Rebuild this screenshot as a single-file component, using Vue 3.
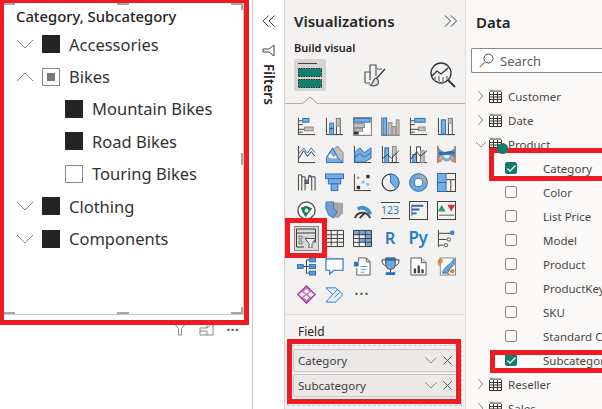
<script setup>
const parents = [
  { label: 'Accessories', state: 'on', open: false },
  { label: 'Bikes', state: 'part', open: true },
  { label: 'Mountain Bikes', state: 'on', child: true },
  { label: 'Road Bikes', state: 'on', child: true },
  { label: 'Touring Bikes', state: 'off', child: true },
  { label: 'Clothing', state: 'on', open: false },
  { label: 'Components', state: 'on', open: false }
]
const fields = [
  { label: 'Category', on: true },
  { label: 'Color' },
  { label: 'List Price' },
  { label: 'Model' },
  { label: 'Product' },
  { label: 'ProductKey' },
  { label: 'SKU' },
  { label: 'Standard Cost' },
  { label: 'Subcategory', on: true }
]
</script>

<template>
  <div class="page">
    <section class="canvas">
      <div class="slicer">
        <div class="slicer-title">Category, Subcategory</div>
        <div v-for="row in parents" :key="row.label" class="slicer-row" :class="{ child: row.child }">
          <svg v-if="!row.child" class="chev" viewBox="0 0 18 10">
            <path :d="row.open ? 'M1 9L9 1L17 9' : 'M1 1L9 9L17 1'" />
          </svg>
          <span class="box" :class="row.state"><i v-if="row.state === 'part'"></i></span>
          <span class="slicer-label">{{ row.label }}</span>
        </div>
        <i class="grip h" style="left:0;top:0"></i>
        <i class="grip h" style="left:114px;top:0"></i>
        <i class="grip h" style="right:0;top:0"></i>
        <i class="grip c" style="right:0;top:0"></i>
        <i class="grip v" style="right:0;top:150px"></i>
        <i class="grip h" style="left:0;bottom:0"></i>
        <i class="grip h" style="left:114px;bottom:0"></i>
        <i class="grip h" style="right:0;bottom:0"></i>
        <i class="grip c" style="right:0;bottom:0"></i>
      </div>
      <div class="card-tools">
        <svg width="14" height="14" viewBox="0 0 14 14"><path class="thin" d="M1 1H13L8.500 6.500V13H5.500V6.500Z" /></svg>
        <svg width="15" height="14" viewBox="0 0 15 14"><path class="thin" d="M8 1H14V13H1V6H8ZM1 9H8V13M8 6L14 1M10 1H14V5" /></svg>
        <span class="dots">···</span>
      </div>
    </section>

    <aside class="filters">
      <svg class="dbl" viewBox="0 0 14 12"><path d="M6.500 0.500L1 6L6.500 11.500M12.500 0.500L7 6L12.500 11.500" /></svg>
      <svg class="funnel" viewBox="0 0 13 13"><path d="M12 1L7 5H1V8H7L12 12Z" /></svg>
      <span class="filters-text">Filters</span>
    </aside>

    <aside class="viz">
      <div class="viz-head">
        <span class="pane-title">Visualizations</span>
        <svg class="dbl" viewBox="0 0 14 12"><path d="M1 0.500L6.500 6L1 11.500M7 0.500L12.500 6L7 11.500" /></svg>
      </div>
      <div class="build">Build visual</div>
      <div class="tabs">
        <div class="tab active">
          <svg width="28" height="28" viewBox="0 0 28 28">
            <path d="M2 2.500H21" stroke="#444" fill="none" />
            <rect x="2.500" y="7.500" width="23" height="8" fill="#118070" stroke="#222" stroke-dasharray="1.500 1" />
            <rect x="2.500" y="18.500" width="23" height="8" fill="#118070" stroke="#222" stroke-dasharray="1.500 1" />
          </svg>
        </div>
        <div class="tab">
          <svg width="26" height="26" viewBox="0 0 26 26" fill="none" stroke="#555" stroke-width="1.200">
            <path d="M2 21V10H7V3H13V7H19M2 21H7" />
            <path d="M13 8V14M7 10V18" />
            <path d="M22 7L13 17" stroke="#333" />
            <path d="M13 16C9 18 11 22 7 23C12 25 17 23 15 18Z" fill="#ddd" />
          </svg>
        </div>
        <div class="tab">
          <svg width="27" height="27" viewBox="0 0 27 27" fill="none" stroke="#333" stroke-width="1.300">
            <circle cx="12" cy="11" r="10" />
            <path d="M19 18L26 25" stroke-width="2" />
            <path d="M3 14L8 9L12 12L19 6" />
            <path d="M6 15V19M10 14V21M14 15V21M18 14V18" stroke="#777" />
          </svg>
        </div>
      </div>
      <div class="tab-rule"><svg class="notch" width="20" height="8" viewBox="0 0 20 8"><path d="M0 8L8 1L16 8" /></svg></div>

      <div class="icon-grid">
        <!-- row 1 -->
        <svg viewBox="0 0 20 20"><path class="k" d="M1.500 1V18.500H19" /><path class="k" d="M2 4H6M2 8H6M2 13H12M2 16H6" /><rect class="b" x="6" y="1.500" width="6.500" height="4" /><rect class="g" x="8" y="10.500" width="9" height="4" /></svg>
        <svg viewBox="0 0 20 20"><path class="k" d="M1.500 1V18.500H19" /><rect class="b" x="5" y="6.500" width="4" height="12" /><path class="k" d="M5 12H9" /><rect class="w" x="12" y="1.500" width="4" height="17" /><rect class="g" x="12" y="1.500" width="4" height="8" /></svg>
        <svg viewBox="0 0 20 20"><rect class="o" x="0.500" y="0.500" width="19" height="19" /><rect class="b" x="1" y="1.500" width="17" height="4" /><rect class="g" x="1" y="7" width="11" height="4" /><rect class="g" x="1" y="12" width="9" height="3" /><rect x="1" y="15.500" width="5" height="3" fill="#333" /></svg>
        <svg viewBox="0 0 20 20"><path class="o" d="M0.500 0.500V19.500H19.500" /><rect class="b" x="2" y="1" width="4" height="18" /><rect class="g" x="7.500" y="6" width="4" height="13" /><rect class="g" x="12.500" y="10" width="3" height="9" /><rect class="g" x="16" y="3" width="3" height="16" /></svg>
        <svg viewBox="0 0 20 20"><path class="k" d="M1.500 1V18.500H19" /><path class="k" d="M2 4H6M2 8H6M2 13H12M2 16H6" /><rect class="b" x="6" y="1.500" width="11" height="4" /><rect class="g" x="10" y="10.500" width="7" height="4" /></svg>
        <svg viewBox="0 0 20 20"><path class="k" d="M1.500 1V18.500H19" /><rect class="b" x="4.500" y="3" width="4.500" height="15" /><rect class="w" x="12" y="1.500" width="4" height="17" /><rect class="g" x="12" y="1.500" width="4" height="5" /></svg>
        <!-- row 2 -->
        <svg viewBox="0 0 20 20"><path class="k" d="M1.500 1V18.500H19" /><path class="k" d="M2 14L7 6L11 12L15 7L19 12" /><path class="bl" d="M2 9L7 3.500L11 8.500L15 3L19 8" /></svg>
        <svg viewBox="0 0 20 20"><path class="g" d="M8 6L13 1L19 8V18.500H11Z" /><path class="b" d="M1.500 18.500V13L8 3L14 14L19 18.500Z" /><path class="wf" d="M3 12L6 9L9 13L12 11V14H5Z" /></svg>
        <svg viewBox="0 0 20 20"><path class="k" d="M1.500 1V18.500H19" /><path class="b" d="M2 8L7 3L12 8L19 3V14L12 18H2Z" /><path class="bl" d="M2 13L7 9L12 13L19 8" /></svg>
        <svg viewBox="0 0 20 20"><path class="k" d="M1.500 1V18.500H19" /><rect class="b" x="4" y="3" width="4" height="15.500" /><rect class="g" x="12" y="1.500" width="4" height="9" /><path class="k" d="M2 14L7 10L11 14L19 6" /><path class="k" d="M12 11V18.500H16V11" /></svg>
        <svg viewBox="0 0 20 20"><path class="k" d="M1.500 1V18.500H19" /><rect class="b" x="4" y="10" width="4" height="8.500" /><rect class="w" x="8" y="2" width="4" height="16.500" /><rect class="g" x="12" y="6" width="4" height="12.500" /><path class="k" d="M2 15L8 7L12 12L19 6" /></svg>
        <svg viewBox="0 0 20 20"><path class="k" d="M1 1V19M19 1V19" /><path d="M1 2C6 9 14 9 19 2V15C14 9 6 9 1 15Z" fill="#888" /><path d="M2 8C8 12 12 5 18 9" fill="none" stroke="#2a6ebb" stroke-width="3" /><path d="M5 12C8 17 13 17 15 12" fill="none" stroke="#6fa8dc" stroke-width="3" /><rect x="1" y="14" width="4" height="4" fill="#e8833a" /><rect x="15" y="14" width="4" height="4" fill="#e8833a" /></svg>
        <!-- row 3 -->
        <svg viewBox="0 0 20 20"><path class="k" d="M1.500 18.500V2H5M5 18.500V2M8.500 18.500V4H5M12 4V11H8.500M12 4H15.500V18.500M19 18.500V4H15.500" /><path d="M9 8H12M12 3H15" stroke="#2a6ebb" stroke-width="2" /><path d="M9 7V10.500H12.500" stroke="#555" stroke-width="2" fill="none" /></svg>
        <svg viewBox="0 0 20 20"><rect class="bd" x="0.500" y="1" width="19" height="5" /><rect class="bd" x="3.500" y="6" width="13" height="5.500" /><rect class="bd" x="6.500" y="11.500" width="7" height="7" /></svg>
        <svg viewBox="0 0 20 20"><path class="k" d="M1.500 1V18.500H19" /><rect x="14" y="2" width="3.500" height="3.500" fill="#333" /><rect x="4.500" y="4" width="2" height="2" fill="#888" /><rect x="9" y="8" width="3" height="3" fill="#8ebce8" /><rect x="14" y="10.500" width="3" height="3" fill="#8ebce8" /><rect x="4" y="13.500" width="3.500" height="3.500" fill="#333" /></svg>
        <svg viewBox="0 0 20 20"><circle class="k" cx="10" cy="10" r="8.800" stroke-width="1.300" /><path class="b" d="M10 1.200V10L16 16.500A8.800 8.800 0 0 0 10 1.200Z" /></svg>
        <svg viewBox="0 0 20 20"><circle cx="10" cy="10" r="7" fill="none" stroke="#6fa8dc" stroke-width="5" /><path d="M10 3A7 7 0 0 1 17 10" fill="none" stroke="#aaa" stroke-width="5" /><circle cx="10" cy="10" r="9.300" fill="none" stroke="#2a6ebb" /><circle cx="10" cy="10" r="4.500" fill="#fff" stroke="#2a6ebb" /></svg>
        <svg viewBox="0 0 20 20"><rect class="k" x="0.500" y="0.500" width="19" height="19" /><rect class="bd" x="0.500" y="0.500" width="9" height="9.500" /><rect class="bd" x="0.500" y="10" width="9" height="9.500" /><path class="k" d="M10 7H19.500M14.500 7V19.500" /></svg>
        <!-- row 4 -->
        <svg viewBox="0 0 20 20"><circle cx="10" cy="10" r="9" fill="#fff" stroke="#555" stroke-width="1.500" /><path d="M10 5L16 8L12 13L9 17L6 12L4 7Z" fill="#0f7d63" /><circle cx="10" cy="10" r="2" fill="#fff" /></svg>
        <svg viewBox="0 0 20 20"><path d="M9 1L19 2V13L14 18L9 17Z" fill="#a6a6a6" /><path d="M1 1H9V8L13 11L9 18L4 15L1 8Z" fill="#6f9fd3" stroke="#3a76b8" /></svg>
        <svg viewBox="0 0 20 20"><path d="M2 18A8.500 8.500 0 0 1 18 18" fill="none" stroke="#444" stroke-width="2" /><path d="M5 8.500A8.500 8.500 0 0 1 18 14" fill="none" stroke="#4b8ed0" stroke-width="4" /><path class="k" d="M7 18L13 12" stroke-width="2" /></svg>
        <div class="ic-123">123</div>
        <svg viewBox="0 0 20 20"><rect class="k" x="0.500" y="0.500" width="19" height="19" /><path d="M3 4V16" stroke="#666" /><path d="M3 5H15M3 9H11M3 13H8" stroke="#2a6ebb" stroke-width="2" /></svg>
        <svg viewBox="0 0 20 20"><rect class="k" x="0.500" y="0.500" width="19" height="19" /><path d="M5 4L9 11H1Z" fill="#2d9f5d" /><path d="M11 4H19L15 11Z" fill="#d8303a" /><path d="M2 15H18" stroke="#888" stroke-width="1.500" /></svg>
        <!-- row 5 -->
        <div class="slicer-ic">
          <svg width="20" height="20" viewBox="0 0 20 20"><path class="k" d="M15 14H19.500V1H0.500V19H8" /><path class="k" d="M0.500 5H19.500" /><path d="M3 8H6V11H3ZM3 13H6V16H3Z" fill="none" stroke="#777" /><path d="M7 9H12M7 14H9" stroke="#aaa" /><path d="M9 10.500H20L16 15.500V20H13V15.500Z" fill="#fff" stroke="#555" /></svg>
        </div>
        <svg viewBox="0 0 20 20"><path class="k" d="M0.500 1.500H19.500V18.500H0.500ZM0.500 6H19.500M0.500 10H19.500M0.500 14H19.500M6.500 1.500V18.500M13 1.500V18.500" /></svg>
        <svg viewBox="0 0 20 20"><rect x="0.500" y="1.500" width="19" height="5" fill="#6fa8dc" /><rect x="13" y="6.500" width="6.500" height="12" fill="#6fa8dc" /><rect x="6.500" y="10" width="6.500" height="4" fill="#6fa8dc" /><path class="k" d="M0.500 1.500H19.500V18.500H0.500ZM0.500 6H19.500M0.500 10H19.500M0.500 14H19.500M6.500 1.500V18.500M13 1.500V18.500" /></svg>
        <div class="ic-letter r">R</div>
        <div class="ic-letter py">Py</div>
        <svg viewBox="0 0 20 20"><path class="k" d="M1.500 1V19M2 4.500H14M2 11H10M2 17H7" /><circle cx="16" cy="4" r="2.500" fill="#3b86cc" /><circle cx="12.500" cy="11" r="1.800" fill="none" stroke="#555" /><circle cx="9.500" cy="17" r="1.800" fill="none" stroke="#555" /></svg>
        <!-- row 6 -->
        <svg viewBox="0 0 20 20"><path class="k" d="M6 10H10M10 3V17M10 3H13M10 10H13M10 17H13" /><rect class="bf" x="0.500" y="8" width="6" height="4" /><rect class="bf" x="13" y="1" width="6.500" height="4" /><rect class="bf" x="13" y="8" width="6.500" height="4" /><rect class="bf" x="13" y="15" width="6.500" height="4" /></svg>
        <svg viewBox="0 0 20 20"><path d="M1 2H19V14H9L5 18V14H1Z" fill="#fff" stroke="#2a6ebb" stroke-width="1.200" /></svg>
        <svg viewBox="0 0 20 20"><path d="M6 1H14L18 5V19H4V12M6 1V5M14 1V5H18" fill="#fff" stroke="#555" /><rect x="1" y="5" width="5" height="5" fill="#2a78c4" /><path d="M8 10H15M8 13H14M8 16H12" stroke="#4b9fe0" /></svg>
        <svg viewBox="0 0 20 20"><path d="M5 1H15V8C15 11 13 13 10 13C7 13 5 11 5 8Z" fill="#6fa8dc" stroke="#444" /><path class="k" d="M5 3H1C1 7 3 9 5 9M15 3H19C19 7 17 9 15 9M10 13V17" /><rect x="5" y="16" width="10" height="3" fill="#2a6ebb" /><rect x="5" y="1" width="10" height="3" fill="#2a6ebb" /></svg>
        <svg viewBox="0 0 20 20"><path d="M2 1H13L18 6V19H2Z" fill="#fff" stroke="#555" /><path d="M13 1V6H18" fill="#ddd" stroke="#555" /><path d="M5 17V12H7.500V17ZM9 17V9H11.500V17ZM13 17V13H15.500V17Z" fill="#444" /></svg>
        <svg viewBox="0 0 20 20"><rect x="3.500" y="1" width="16" height="18" fill="#fff" stroke="#888" /><path d="M6 15L10 10L14 7L18 2V8L14 12L11 17H6Z" fill="#6fa8dc" stroke="#2a6ebb" /><path d="M3 1A3 3 0 0 1 3 7L2 11L1 7Q0 4 3 1Z" fill="#e8833a" /><circle cx="16" cy="15" r="2.300" fill="#e8833a" /><circle cx="12" cy="18" r="1.300" fill="#e8833a" /></svg>
        <!-- row 7 -->
        <svg viewBox="0 0 20 20"><path d="M10 1L19 10L10 19L1 10Z" fill="none" stroke="#a8329e" stroke-width="1.500" /><path d="M10 3L14 7L10 10L6 7ZM10 10L14 13L10 17L6 13Z" fill="none" stroke="#c568bf" stroke-width="1.200" /></svg>
        <svg viewBox="0 0 20 20"><path d="M1 3H11L19 10L11 18H1L8 10Z" fill="#e6f0fa" stroke="#2a78c4" /><path d="M8 10L14 4M10 13L15 8" stroke="#2a78c4" /></svg>
        <div class="more">···</div>
      </div>

      <div class="field-rule"></div>
      <div class="field-label">Field</div>
      <div class="well">
        <div v-for="name in ['Category', 'Subcategory']" :key="name" class="pill">
          <span class="pill-text">{{ name }}</span>
          <svg width="12" height="7" viewBox="0 0 12 7"><path d="M0.500 0.500L6 6L11.500 0.500" fill="none" stroke="#a08060" /></svg>
          <svg width="9" height="9" viewBox="0 0 9 9"><path d="M0.500 0.500L8.500 8.500M8.500 0.500L0.500 8.500" fill="none" stroke="#555" /></svg>
        </div>
      </div>
    </aside>

    <aside class="data">
      <div class="pane-title data-title">Data</div>
      <div class="search">
        <svg width="15" height="15" viewBox="0 0 15 15"><circle cx="9.500" cy="5.500" r="4.500" fill="none" stroke="#444" /><path d="M6 9L1 14" stroke="#c27a30" stroke-width="1.200" /></svg>
        <span>Search</span>
      </div>
      <div class="table-row first">
        <svg class="tw" viewBox="0 0 7 12"><path d="M1 1L6 6L1 11" /></svg>
        <svg class="grid-ic" viewBox="0 0 13 13"><path d="M0.500 2V12.500H12.500V2M0.500 1H12.500M0.500 4.500H12.500M0.500 7H12.500M0.500 9.500H12.500M4.500 2V12.500M8.500 2V12.500" /></svg>
        <span>Customer</span>
      </div>
      <div class="table-row">
        <svg class="tw" viewBox="0 0 7 12"><path d="M1 1L6 6L1 11" /></svg>
        <svg class="grid-ic" viewBox="0 0 13 13"><path d="M0.500 2V12.500H12.500V2M0.500 1H12.500M0.500 4.500H12.500M0.500 7H12.500M0.500 9.500H12.500M4.500 2V12.500M8.500 2V12.500" /></svg>
        <span>Date</span>
      </div>
      <div class="table-row">
        <svg class="tw open" viewBox="0 0 12 7"><path d="M1 1L6 6L11 1" /></svg>
        <svg class="grid-ic" viewBox="0 0 13 13"><path d="M0.500 2V12.500H12.500V2M0.500 1H12.500M0.500 4.500H12.500M0.500 7H12.500M0.500 9.500H12.500M4.500 2V12.500M8.500 2V12.500" /></svg>
        <span>Product</span>
      </div>
      <div v-for="f in fields" :key="f.label" class="field-row">
        <span class="check" :class="{ on: f.on }">
          <svg v-if="f.on" width="9" height="7" viewBox="0 0 9 7"><path d="M0.500 3.500L3 6L8.500 0.500" fill="none" stroke="#fff" stroke-width="1.300" /></svg>
        </span>
        <span class="field-name">{{ f.label }}</span>
      </div>
      <div class="table-row">
        <svg class="tw" viewBox="0 0 7 12"><path d="M1 1L6 6L1 11" /></svg>
        <svg class="grid-ic" viewBox="0 0 13 13"><path d="M0.500 2V12.500H12.500V2M0.500 1H12.500M0.500 4.500H12.500M0.500 7H12.500M0.500 9.500H12.500M4.500 2V12.500M8.500 2V12.500" /></svg>
        <span>Reseller</span>
      </div>
      <div class="table-row">
        <svg class="tw" viewBox="0 0 7 12"><path d="M1 1L6 6L1 11" /></svg>
        <svg class="grid-ic" viewBox="0 0 13 13"><path d="M0.500 2V12.500H12.500V2M0.500 1H12.500M0.500 4.500H12.500M0.500 7H12.500M0.500 9.500H12.500M4.500 2V12.500M8.500 2V12.500" /></svg>
        <span>Sales</span>
      </div>
    </aside>

    <div class="mark slicer-mark"></div>
    <div class="mark" style="left:285px;top:218px;width:42px;height:40px"></div>
    <div class="mark" style="left:287px;top:339px;width:174px;height:65px"></div>
    <div class="mark" style="left:489px;top:148px;width:120px;height:33px"></div>
    <div class="mark" style="left:490px;top:350px;width:120px;height:23px"></div>
    <i class="dot"></i>
  </div>
</template>

<style>
html, body { margin: 0; overflow: hidden; background: #fff; }
</style>

<style scoped>
.page {
  position: relative;
  display: flex;
  width: 602px;
  height: 409px;
  overflow: hidden;
  font-family: "Noto Sans", "Open Sans", sans-serif;
  color: #252423;
  background: #fff;
}
.canvas { width: 252px; flex: none; border-right: 1px solid #c8c6c4; }
.slicer {
  position: relative;
  width: 240px;
  height: 311px;
  margin: 3px 0 0 3px;
  border-right: 1px solid #c8c6c4;
  border-bottom: 1px solid #c8c6c4;
  box-sizing: content-box;
}
.slicer-title { font-size: 14.800px; font-weight: 500; line-height: 20px; padding: 3px 0 0 13px; height: 22px; }
.slicer-row { display: flex; align-items: center; height: 32.4px; padding-left: 13px; font-size: 16.500px; color: #333; }
.slicer-row.child { padding-left: 62px; }
.chev { width: 18px; height: 10px; margin-right: 8px; fill: none; stroke: #8a8886; flex: none; }
.box { width: 18px; height: 18px; box-sizing: border-box; flex: none; margin-right: 9px; display: flex; align-items: center; justify-content: center; }
.box.on { background: #252423; }
.box.off { background: #fff; border: 1px solid #8a8886; }
.box.part { border: 1px solid #8a8886; }
.box.part i { width: 8px; height: 8px; background: #7a7a7a; }
.slicer-label { white-space: nowrap; }
.grip { position: absolute; background: #a6a6a6; display: block; }
.grip.h { width: 12px; height: 2px; }
.grip.v { width: 2px; height: 12px; }
.grip.c { width: 2px; height: 7px; }
.card-tools { display: flex; align-items: center; justify-content: flex-end; gap: 12px; height: 16px; margin-top: 6px; padding-right: 13px; }
.thin { fill: none; stroke: #8a8886; }
.dots { font-size: 15px; font-weight: 700; color: #666; line-height: 14px; }

.filters {
  width: 31px;
  flex: none;
  border-right: 1px solid #d2d0ce;
  display: flex;
  flex-direction: column;
  align-items: center;
  box-sizing: content-box;
}
.dbl { width: 14px; height: 12px; fill: none; stroke: #444; flex: none; }
.filters .dbl { margin-top: 15px; }
.funnel { width: 13px; height: 13px; margin-top: 17px; fill: none; stroke: #444; }
.filters-text { writing-mode: vertical-rl; font-size: 13.500px; font-weight: 600; margin-top: 7px; color: #252423; }

.viz { width: 180px; flex: none; background: #f3f2f1; border-right: 1px solid #e1dfdd; position: relative; }
.viz-head { display: flex; align-items: center; justify-content: space-between; height: 22px; padding: 10px 7px 0 9px; }
.pane-title { font-size: 15px; font-weight: 600; color: #252423; line-height: 22px; }
.build { font-size: 11px; font-weight: 600; line-height: 16px; margin: 8px 0 0 9px; }
.tabs { display: flex; align-items: center; justify-content: space-between; width: 164px; height: 32px; margin: 3px 0 0 9px; }
.tab { width: 32px; height: 32px; display: flex; align-items: center; justify-content: center; border-radius: 2px; }
.tab.active { background: #d6d4d2; }
.tab-rule { position: relative; height: 1px; background: #b3b0ad; margin-top: 12px; }
.notch { position: absolute; left: 17px; top: -7px; fill: #f3f2f1; stroke: #a19f9d; }
.icon-grid {
  display: grid;
  grid-template-columns: repeat(6, 28px);
  grid-auto-rows: 28px;
  margin: 8px 0 0 7px;
  justify-items: center;
  align-items: center;
}
.icon-grid > svg { width: 19px; height: 19px; }
.k { fill: none; stroke: #3b3a39; }
.b { fill: #77ade3; stroke: #2a6ebb; }
.bd { fill: #77ade3; stroke: #2a6ebb; }
.bf { fill: #5a9ad8; stroke: #2a6ebb; }
.g { fill: #c2c0be; stroke: #8a8886; }
.w { fill: #fff; stroke: #3b3a39; }
.wf { fill: #fff; stroke: none; }
.o { fill: #fff; stroke: #8a8886; stroke-width: 1.500; }
.bl { fill: none; stroke: #2a6ebb; }
.ic-123 { width: 19px; height: 17px; border-top: 1.500px solid #444; border-bottom: 1.500px solid #444; font: 10.500px/15px "Noto Sans", sans-serif; color: #2a78c4; text-align: center; box-sizing: border-box; }
.ic-letter { font-weight: 600; color: #2a7ec4; line-height: 20px; }
.ic-letter.r { font-size: 16.500px; }
.ic-letter.py { font-size: 17px; letter-spacing: -0.5px; }
.slicer-ic { width: 25px; height: 25px; box-sizing: border-box; background: #dcdbd9; border: 1px solid #8a8886; display: flex; align-items: center; justify-content: center; }
.more { font-size: 14px; font-weight: 700; letter-spacing: 1px; color: #5c5a58; line-height: 20px; }
.field-rule { height: 1px; background: #dedcda; margin-top: 6px; }
.field-label { font-size: 12px; line-height: 18px; margin: 8px 0 0 13px; }
.well { margin: 4px 0 0 2px; padding: 3px 4px 8px 5px; width: 164px; display: flex; flex-direction: column; gap: 2px; border: 1px dashed #c8c6c4; box-sizing: content-box; }
.pill { display: flex; align-items: center; gap: 6px; box-sizing: border-box; background: #ebe9e7; border: 1px solid #c8c6c4; border-radius: 2px; padding: 0 4px; height: 23px; font-size: 11.500px; color: #404040; }
.pill-text { flex: 1; }

.data { flex: 1; background: #faf9f8; min-width: 0; white-space: nowrap; }
.data-title { padding: 11px 0 0 10px; }
.search { display: flex; align-items: center; gap: 6px; height: 25px; box-sizing: border-box; margin: 15px 0 0 5px; padding-left: 7px; border: 1px solid #8a8886; border-right: none; border-radius: 2px 0 0 2px; background: #fff; font-size: 13px; color: #605e5c; }
.table-row { display: flex; align-items: center; height: 24px; padding-left: 11px; font-size: 11.500px; color: #484644; }
.table-row.first { margin-top: 11px; }
.tw { width: 7px; height: 12px; fill: none; stroke: #8a8886; flex: none; margin-right: 5px; }
.tw.open { width: 12px; height: 7px; margin-left: -2px; margin-right: 2px; }
.grid-ic { width: 13px; height: 13px; fill: none; stroke: #3b3a39; flex: none; margin-right: 6px; }
.field-row { display: flex; align-items: center; height: 24px; padding-left: 39px; font-size: 11.500px; color: #484644; }
.check { width: 12px; height: 12px; box-sizing: border-box; border: 1px solid #8a8886; border-radius: 2px; margin-right: 26px; display: flex; align-items: center; justify-content: center; flex: none; }
.check.on { background: #0f7d6a; border-color: #0f7d6a; }

.mark { position: absolute; box-sizing: border-box; border: 5px solid #ed1c24; pointer-events: none; }
.slicer-mark { left: -1px; top: -2px; width: 250px; height: 327px; }
.dot { position: absolute; left: 497px; top: 143px; width: 11px; height: 11px; border-radius: 50%; background: #0f7d6a; }
</style>
